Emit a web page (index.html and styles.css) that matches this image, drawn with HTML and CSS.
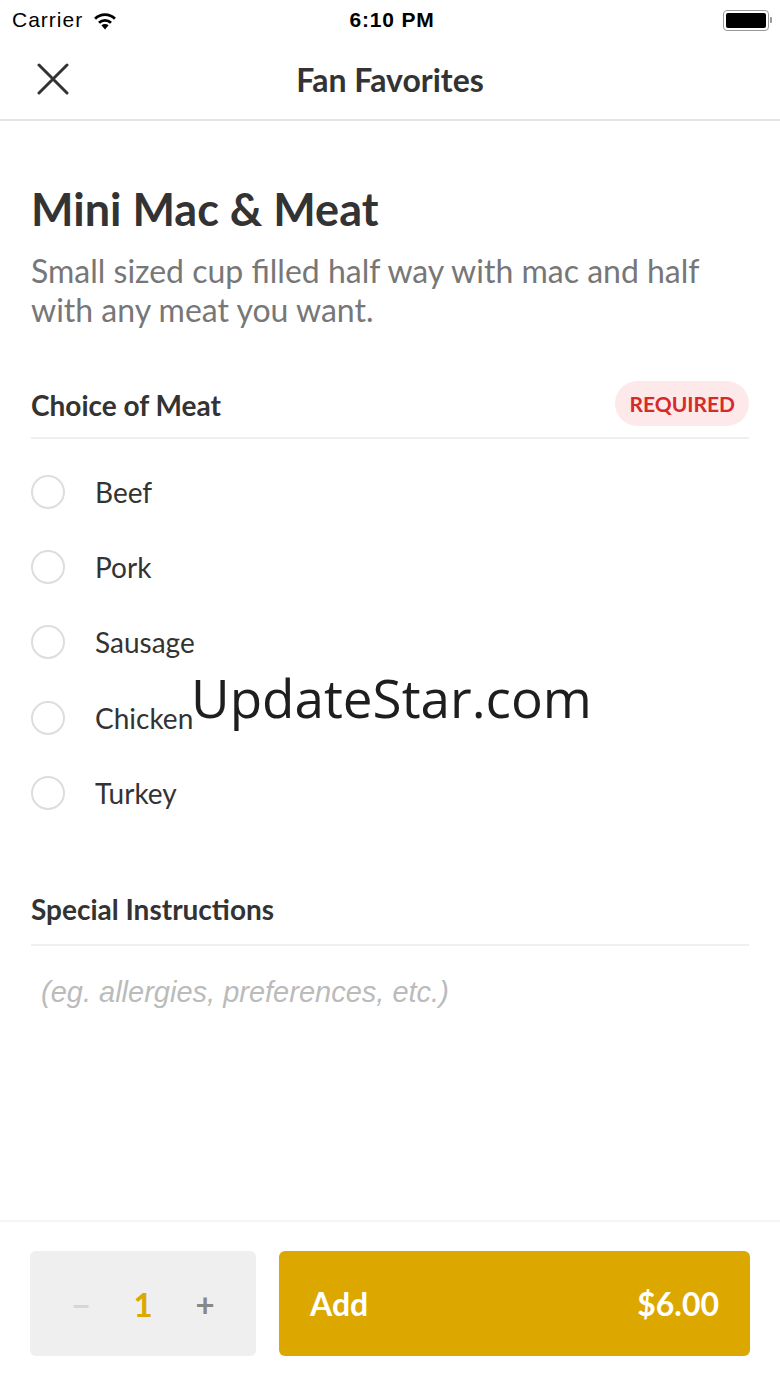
FILE: index.html
```html
<!DOCTYPE html>
<html lang="en">
<head>
    <meta charset="UTF-8">
    <meta name="viewport" content="width=device-width, initial-scale=1.0">
    <title>Fan Favorites</title>
    <link rel="stylesheet" href="styles.css">
</head>
<body>

<div class="screen">
    <!-- iOS status bar -->
    <div class="status-bar">
        <div class="status-left">
            <span>Carrier</span>
            <svg class="wifi" width="26" height="19" viewBox="0 0 24 18">
                <path d="M12 17.5 L8.6 13.6 A5 5 0 0 1 15.4 13.6 Z" fill="#000"/>
                <path d="M6.3 11.1 A8.2 8.2 0 0 1 17.7 11.1" fill="none" stroke="#000" stroke-width="2.6"/>
                <path d="M2.6 7.3 A13.2 13.2 0 0 1 21.4 7.3" fill="none" stroke="#000" stroke-width="2.6"/>
            </svg>
        </div>
        <div class="status-time">6:10 PM</div>
        <div class="status-right">
            <div class="battery"><div class="battery-fill"></div></div>
            <div class="battery-cap"></div>
        </div>
    </div>

    <!-- navigation -->
    <div class="nav-bar">
        <svg class="close-icon" width="32" height="32" viewBox="0 0 32 32">
            <path d="M2 2 L30 30 M30 2 L2 30" stroke="#333" stroke-width="3" stroke-linecap="round"/>
        </svg>
        <h1>Fan Favorites</h1>
    </div>

    <div class="content">
        <h2 class="item-title">Mini Mac &amp; Meat</h2>
        <p class="item-desc">Small sized cup filled half way with mac and half with any meat you want.</p>

        <div class="section-head">
            <span>Choice of Meat</span>
            <span class="badge">REQUIRED</span>
        </div>
        <ul class="options">
            <li><span class="radio"></span>Beef</li>
            <li><span class="radio"></span>Pork</li>
            <li><span class="radio"></span>Sausage</li>
            <li><span class="radio"></span>Chicken</li>
            <li><span class="radio"></span>Turkey</li>
        </ul>

        <div class="section-head instructions">
            <span>Special Instructions</span>
        </div>
        <div class="placeholder">(eg. allergies, preferences, etc.)</div>
    </div>

    <div class="footer">
        <div class="stepper">
            <span class="minus">&minus;</span>
            <span class="qty">1</span>
            <span class="plus">+</span>
        </div>
        <div class="add-btn">
            <span>Add</span>
            <span>$6.00</span>
        </div>
    </div>

    <div class="watermark">UpdateStar.com</div>
</div>

</body>
</html>
```

FILE: styles.css
```css
/* Basic page setup */
body {
    margin: 0;
    background-color: #fff;
    font-family: Lato, "Open Sans", sans-serif;
    color: #333;
}
.screen {
    position: relative;
    display: flex;
    flex-direction: column;
    height: 100vh;
}

/* Status bar */
.status-bar {
    height: 40px;
    display: flex;
    align-items: center;
    justify-content: space-between;
    padding: 0 8px 0 12px;
    font-family: "Liberation Sans", Arial, sans-serif;
    font-size: 21px;
    color: #000;
}
.status-left {
    display: flex;
    align-items: center;
    gap: 9px;
    width: 200px;
    letter-spacing: 1px;
}
.status-time {
    font-weight: bold;
    font-size: 21px;
    letter-spacing: 0.8px;
}
.status-right {
    width: 200px;
    display: flex;
    justify-content: flex-end;
    align-items: center;
}
.battery {
    width: 40px;
    height: 15px;
    border: 1.5px solid #999;
    border-radius: 4px;
    padding: 2px;
}
.battery-fill {
    width: 100%;
    height: 100%;
    background-color: #000;
    border-radius: 2px;
}
.battery-cap {
    width: 2px;
    height: 6px;
    background-color: #999;
    margin-left: 1px;
    border-radius: 0 1px 1px 0;
}

/* Navigation */
.nav-bar {
    height: 79px;
    border-bottom: 2px solid #e3e3e3;
    display: flex;
    align-items: center;
    justify-content: center;
    position: relative;
}
.close-icon {
    position: absolute;
    left: 37px;
    top: 23px;
}
.nav-bar h1 {
    margin: 0;
    font-size: 32px;
    font-weight: bold;
    color: #333;
}

/* Item content */
.content {
    flex: 1;
    padding: 0 31px;
}
.item-title {
    margin: 60px 0 0;
    font-size: 45px;
    font-weight: bold;
    line-height: 56px;
}
.item-desc {
    margin: 14px 0 0;
    font-size: 32px;
    line-height: 39px;
    color: #777;
}
.section-head {
    margin-top: 43px;
    height: 67px;
    display: flex;
    align-items: center;
    justify-content: space-between;
    border-bottom: 2px solid #efefef;
    font-size: 28px;
    font-weight: bold;
    box-sizing: border-box;
}
.badge {
    background-color: #fde9e9;
    color: #d62b2b;
    font-size: 21px;
    font-weight: bold;
    padding: 0 14px;
    height: 45px;
    line-height: 45px;
    border-radius: 23px;
    margin-top: -3px;
}
.options {
    list-style: none;
    margin: 15px 0 0;
    padding: 0;
}
.options li {
    height: 75.3px;
    display: flex;
    align-items: center;
    font-size: 28px;
}
.radio {
    width: 30px;
    height: 30px;
    border: 2px solid #ddd;
    border-radius: 50%;
    margin-right: 30px;
}
.instructions {
    margin-top: 47px;
    height: 69px;
    padding-bottom: 3px;
}
.placeholder {
    margin: 30px 0 0 10px;
    font-family: "Liberation Sans", Arial, sans-serif;
    font-style: italic;
    font-size: 29px;
    color: #bbb;
}

/* Bottom bar */
.footer {
    border-top: 2px solid #f5f5f5;
    padding: 29px 30px 31px;
    display: flex;
    gap: 23px;
}
.stepper {
    width: 226px;
    height: 105px;
    background-color: #efefef;
    border-radius: 6px;
    display: flex;
    align-items: center;
    justify-content: space-around;
    padding: 0 20px;
    box-sizing: border-box;
    font-size: 33px;
    font-weight: bold;
}
.minus {
    color: #d6d6d6;
}
.qty {
    color: #dca800;
}
.plus {
    color: #888;
}
.add-btn {
    flex: 1;
    height: 105px;
    background-color: #dca800;
    border-radius: 6px;
    display: flex;
    align-items: center;
    justify-content: space-between;
    padding: 0 31px;
    color: #fff;
    font-size: 32px;
    font-weight: bold;
}

/* Watermark overlay */
.watermark {
    position: absolute;
    left: 191px;
    top: 661px;
    font-family: "Open Sans", sans-serif;
    font-size: 53px;
    color: #1e1e1e;
}
```
